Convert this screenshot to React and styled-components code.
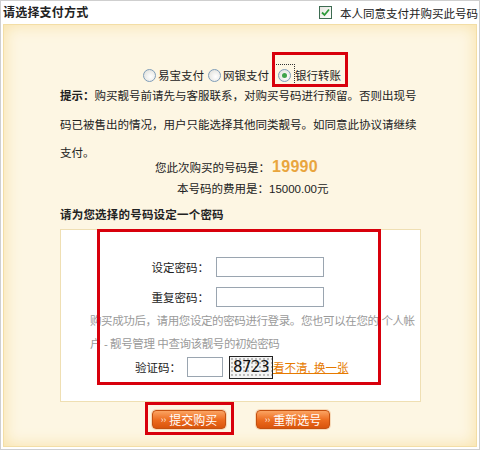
import styled, { createGlobalStyle } from "styled-components";

const GlobalStyle = createGlobalStyle`
  html, body {
    margin: 0;
    padding: 0;
    background: #fff;
  }
  body {
    font-family: "Liberation Sans", "Noto Sans CJK SC", sans-serif;
    font-size: 11.5px;
    color: #222;
  }
`;

const Frame = styled.div`
  position: relative;
  width: 480px;
  height: 450px;
  box-sizing: border-box;
  border: 1px solid #cfcfcf;
  display: flex;
  flex-direction: column;
  background: #fff;
  overflow: hidden;
`;

const Header = styled.div`
  height: 23px;
  display: flex;
  align-items: center;
  justify-content: space-between;
  padding: 0 1px 0 2px;
`;

const Title = styled.div`
  font-weight: bold;
  font-size: 12px;
  letter-spacing: 0.2px;
  margin-top: -2px;
`;

const Agree = styled.label`
  display: flex;
  align-items: center;
  gap: 8px;
  color: #222;
`;

const CheckBox = styled.span`
  width: 11px;
  height: 11px;
  border: 1px solid #3d6b52;
  background: linear-gradient(135deg, #e6e6e0, #fff);
  display: flex;
  align-items: center;
  justify-content: center;
`;

const Panel = styled.div`
  flex: 1;
  margin: 0 2px 2px 2px;
  border: 1px solid #f3dea6;
  background: #fdf6e3;
  box-shadow: inset 0 0 16px #f8e1a6;
  padding: 42px 0 0 56px;
  display: flex;
  flex-direction: column;
`;

const RadioRow = styled.div`
  display: flex;
  align-items: center;
  height: 16px;
  padding-left: 83px;
`;

const RadioOption = styled.label`
  display: flex;
  align-items: center;
  margin-right: 4px;
  color: #222;
`;

const Focus = styled.span`
  display: flex;
  align-items: center;
  padding: ${(p) => (p.$focused ? "4px 1px 4px 4px" : "0")};
  border: ${(p) => (p.$focused ? "1px dotted #333" : "none")};
`;

const Circle = styled.span`
  width: 11px;
  height: 11px;
  border-radius: 50%;
  border: 1px solid #7f9db9;
  background: radial-gradient(circle at 60% 60%, #fff, #dcdcd6);
  display: flex;
  align-items: center;
  justify-content: center;
  margin-right: 2px;

  &::after {
    content: "";
    width: 5px;
    height: 5px;
    border-radius: 50%;
    background: ${(p) => (p.$checked ? "#3ea34a" : "transparent")};
  }
`;

const Tip = styled.p`
  margin: -1px 0 -12px 0;
  line-height: 28.5px;
  color: #222;
  white-space: nowrap;
`;

const InfoRow = styled.div`
  display: flex;
  align-items: center;
  height: ${(p) => p.$h}px;
  padding-left: ${(p) => p.$indent}px;
`;

const Number = styled.span`
  font-family: "Liberation Sans", sans-serif;
  font-weight: bold;
  font-size: 16px;
  color: #e9a53d;
  margin-left: 2px;
  letter-spacing: 0.3px;
`;

const SectionTitle = styled.div`
  font-weight: bold;
  height: 20px;
  line-height: 20px;
  margin-top: 7px;
  letter-spacing: 0.2px;
`;

const FormBox = styled.div`
  margin-top: 4px;
  width: 361px;
  height: 173px;
  box-sizing: border-box;
  background: #fff;
  border: 1px solid #efdfb3;
  padding-top: 27px;
  display: flex;
  flex-direction: column;
`;

const FieldGrid = styled.div`
  display: grid;
  grid-template-columns: 58px 108px;
  column-gap: 7px;
  row-gap: 10px;
  padding-left: 90px;
  align-items: center;
`;

const Label = styled.span`
  text-align: right;
  white-space: nowrap;
  color: #222;
`;

const TextInput = styled.span`
  display: block;
  width: ${(p) => p.$w}px;
  height: 18px;
  border: 1px solid #9aa5b0;
  background: #fff;
`;

const Note = styled.p`
  margin: 3px 0 0 0;
  padding-left: 29px;
  line-height: 23px;
  letter-spacing: -0.4px;
  color: #9a9a9a;
  white-space: pre;
`;

const CaptchaRow = styled.div`
  display: flex;
  align-items: center;
  height: 23px;
  padding-left: 74px;
  gap: 6px;
`;

const Captcha = styled.span`
  width: 42px;
  height: 21px;
  border: 1px solid #222;
  background-color: #f4f4f4;
  background-image: radial-gradient(#777 0.6px, transparent 0.8px);
  background-size: 4px 4px;
  font-family: "DejaVu Sans", sans-serif;
  font-size: 15px;
  line-height: 21px;
  color: #111;
  text-align: center;
  letter-spacing: -0.5px;
`;

const Refresh = styled.a`
  color: #e67a00;
  text-decoration: underline;
  margin-left: -6px;
  white-space: nowrap;
`;

const ButtonRow = styled.div`
  display: flex;
  gap: 30px;
  padding-left: 92px;
  margin-top: 8px;
`;

const OrangeButton = styled.button`
  width: 74px;
  height: 19px;
  padding: 0;
  border: 1px solid #c4500f;
  border-radius: 4px;
  background: linear-gradient(#fba463, #ec6a1d 55%, #d9540c);
  color: #fff;
  font-family: "Noto Sans CJK SC", sans-serif;
  font-size: 12px;
  line-height: 17px;
  display: flex;
  align-items: center;
  justify-content: center;
  gap: 3px;
  box-shadow: 0 0 0 1px #f7d9b8;

  small {
    font-size: 9px;
    opacity: 0.9;
  }
`;

const RedMark = styled.div`
  position: absolute;
  left: ${(p) => p.$x}px;
  top: ${(p) => p.$y}px;
  width: ${(p) => p.$w}px;
  height: ${(p) => p.$h}px;
  box-sizing: border-box;
  border: 3px solid #d8000c;
  pointer-events: none;
`;

function Radio({ label, checked, focused }) {
  return (
    <RadioOption>
      <Focus $focused={focused}>
        <Circle $checked={checked} />
      </Focus>
      {label}
    </RadioOption>
  );
}

export default function App() {
  return (
    <>
      <GlobalStyle />
      <Frame>
        <Header>
          <Title>请选择支付方式</Title>
          <Agree>
            <CheckBox>
              <svg width="9" height="9" viewBox="0 0 9 9">
                <path d="M1 4.5 L3.5 7 L8 1.5" fill="none" stroke="#2e9a3a" strokeWidth="1.8" />
              </svg>
            </CheckBox>
            本人同意支付并购买此号码
          </Agree>
        </Header>
        <Panel>
          <RadioRow>
            <Radio label="易宝支付" />
            <Radio label="网银支付" />
            <Radio label="银行转账" checked focused />
          </RadioRow>
          <Tip>
            <b>提示：</b>购买靓号前请先与客服联系，对购买号码进行预留。否则出现号
            <br />
            码已被售出的情况，用户只能选择其他同类靓号。如同意此协议请继续
            <br />
            支付。
          </Tip>
          <InfoRow $h={22} $indent={95}>
            您此次购买的号码是：<Number>19990</Number>
          </InfoRow>
          <InfoRow $h={20} $indent={117}>
            本号码的费用是：15000.00元
          </InfoRow>
          <SectionTitle>请为您选择的号码设定一个密码</SectionTitle>
          <FormBox>
            <FieldGrid>
              <Label>设定密码：</Label>
              <TextInput $w={106} />
              <Label>重复密码：</Label>
              <TextInput $w={106} />
            </FieldGrid>
            <Note>
              {"购买成功后，请用您设定的密码进行登录。您也可以在您的 个人帐\n户 - 靓号管理 中查询该靓号的初始密码"}
            </Note>
            <CaptchaRow>
              <Label>验证码：</Label>
              <TextInput $w={34} />
              <Captcha>8723</Captcha>
              <Refresh>看不清, 换一张</Refresh>
            </CaptchaRow>
          </FormBox>
          <ButtonRow>
            <OrangeButton>
              <small>››</small>提交购买
            </OrangeButton>
            <OrangeButton>
              <small>››</small>重新选号
            </OrangeButton>
          </ButtonRow>
        </Panel>
        <RedMark $x={271} $y={51} $w={76} $h={35} />
        <RedMark $x={96} $y={228} $w={284} $h={156} />
        <RedMark $x={144} $y={401} $w={89} $h={33} />
      </Frame>
    </>
  );
}
